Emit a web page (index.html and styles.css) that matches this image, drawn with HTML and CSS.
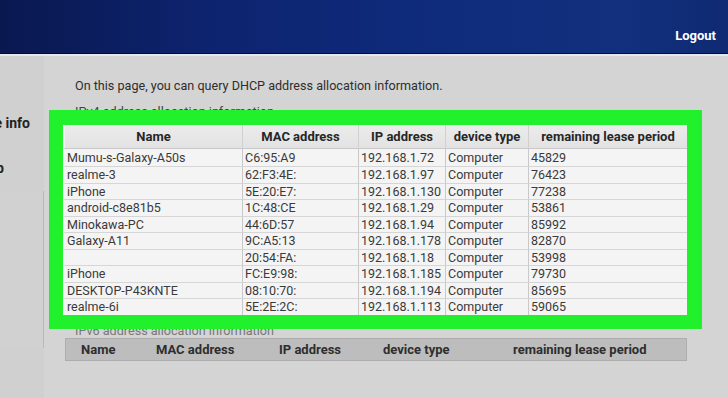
FILE: index.html
```html
<!DOCTYPE html>
<html lang="en">
<head>
<meta charset="utf-8">
<title>DHCP address allocation</title>
<link rel="stylesheet" href="styles.css">
</head>
<body>
<header class="topbar">
  <span class="logout">Logout</span>
</header>
<div class="main">
  <aside class="side">
    <div class="side-item first">Device info</div>
    <div class="side-item">Setup</div>
    <div class="side-rule"></div>
  </aside>
  <section class="content">
    <p class="intro">On this page, you can query DHCP address allocation information.</p>
    <p class="label">IPv4 address allocation information</p>
    <div class="highlight">
      <table class="lease">
        <colgroup>
          <col class="c-name"><col class="c-mac"><col class="c-ip"><col class="c-type"><col class="c-lease">
        </colgroup>
        <thead>
          <tr><th>Name</th><th>MAC address</th><th>IP address</th><th>device type</th><th>remaining lease period</th></tr>
        </thead>
        <tbody>
          <tr><td>Mumu-s-Galaxy-A50s</td><td>C6:95:A9</td><td>192.168.1.72</td><td>Computer</td><td>45829</td></tr>
          <tr><td>realme-3</td><td>62:F3:4E:</td><td>192.168.1.97</td><td>Computer</td><td>76423</td></tr>
          <tr><td>iPhone</td><td>5E:20:E7:</td><td>192.168.1.130</td><td>Computer</td><td>77238</td></tr>
          <tr><td>android-c8e81b5</td><td>1C:48:CE</td><td>192.168.1.29</td><td>Computer</td><td>53861</td></tr>
          <tr><td>Minokawa-PC</td><td>44:6D:57</td><td>192.168.1.94</td><td>Computer</td><td>85992</td></tr>
          <tr><td>Galaxy-A11</td><td>9C:A5:13</td><td>192.168.1.178</td><td>Computer</td><td>82870</td></tr>
          <tr><td></td><td>20:54:FA:</td><td>192.168.1.18</td><td>Computer</td><td>53998</td></tr>
          <tr><td>iPhone</td><td>FC:E9:98:</td><td>192.168.1.185</td><td>Computer</td><td>79730</td></tr>
          <tr><td>DESKTOP-P43KNTE</td><td>08:10:70:</td><td>192.168.1.194</td><td>Computer</td><td>85695</td></tr>
          <tr><td>realme-6i</td><td>5E:2E:2C:</td><td>192.168.1.113</td><td>Computer</td><td>59065</td></tr>
        </tbody>
      </table>
    </div>
    <p class="label label-v6">IPv6 address allocation information</p>
    <div class="v6head">
      <span>Name</span><span>MAC address</span><span>IP address</span><span>device type</span><span>remaining lease period</span>
    </div>
  </section>
</div>
</body>
</html>
```
FILE: styles.css
```css
html, body {
  margin: 0;
  padding: 0;
}
body {
  width: 728px;
  height: 398px;
  overflow: hidden;
  background: #d3d3d3;
  font-family: Roboto, "Liberation Sans", sans-serif;
  color: #333;
}
.topbar {
  height: 53px;
  background: linear-gradient(90deg, #0a1850 0%, #0d2470 30%, #0f2b7c 60%, #12307e 85%, #0f2a72 100%);
  border-bottom: 1px solid #050c2c;
  box-shadow: 0 2px 0 #e4e6f0;
  display: flex;
  align-items: center;
  justify-content: flex-end;
  padding-right: 12px;
}
.logout {
  color: #fff;
  font-weight: bold;
  font-size: 13px;
  margin-top: 17px;
}
.main {
  display: flex;
  height: 344px;
  margin-top: 2px;
}
.side {
  width: 44px;
  flex: none;
  background: #d0d0d0;
  display: flex;
  flex-direction: column;
  align-items: flex-end;
  overflow: hidden;
}
.side-item {
  white-space: nowrap;
  font-weight: bold;
  font-size: 14px;
  color: #222;
  line-height: 18px;
  margin-right: 14px;
}
.side-item.first {
  margin-top: 58px;
}
.side-item + .side-item {
  margin-top: 27px;
  margin-right: 40px;
}
.side-rule {
  align-self: stretch;
  margin-top: 14px;
  height: 157px;
  border-right: 1px solid #b9b9b9;
  background: #d1d1d1;
}
.content {
  flex: 1;
  padding-left: 31px;
  background: #d4d4d4;
}
.intro {
  margin: 22px 0 0;
  font-size: 12.6px;
  line-height: 16px;
  color: #2e2e2e;
}
.label {
  margin: 10px 0 0;
  font-size: 12.6px;
  line-height: 16px;
  color: #444;
}
.highlight {
  position: relative;
  z-index: 1;
  margin: -10px 0 0 -26px;
  width: 624px;
  border: 14px solid #21f12d;
  border-top-width: 15px;
  border-right-width: 15px;
  background: #21f12d;
}
.lease {
  width: 624px;
  table-layout: fixed;
  border-collapse: separate;
  border-spacing: 0;
  background: #f4f4f4;
  font-size: 12.5px;
  color: #3a3a3a;
}
.c-name { width: 179px; }
.c-mac { width: 116px; }
.c-ip { width: 87px; }
.c-type { width: 83px; }
.c-lease { width: 159px; }
.lease th {
  padding: 0;
  line-height: 23px;
  font-weight: bold;
  font-size: 13px;
  color: #262626;
  background: linear-gradient(#ececec, #e2e2e2);
  border-left: 1px solid #d0d0d0;
  border-bottom: 1px solid #c8c8c8;
  text-align: center;
}
.lease td {
  padding: 0 0 0 2px;
  line-height: 15px;
  white-space: nowrap;
  overflow: hidden;
  border-left: 1px solid #c9c9c9;
  border-top: 1px solid #d6d6d6;
}
.lease tbody tr:nth-child(even) td {
  line-height: 16px;
}
.lease tbody tr:first-child td {
  border-top: 0;
  line-height: 17px;
}
.lease th:first-child,
.lease td:first-child {
  border-left: 2px solid #fafafa;
}
.label-v6 {
  margin-top: -6px;
  color: #777;
}
.v6head {
  margin: -1px 0 0 -10px;
  width: 605px;
  height: 21px;
  background: #bdbdbd;
  border: 1px solid #adadad;
  display: grid;
  grid-template-columns: 75px 123px 104px 130px 1fr;
  padding-left: 15px;
  align-items: center;
  font-weight: bold;
  font-size: 13px;
  color: #2e2e2e;
}
```
